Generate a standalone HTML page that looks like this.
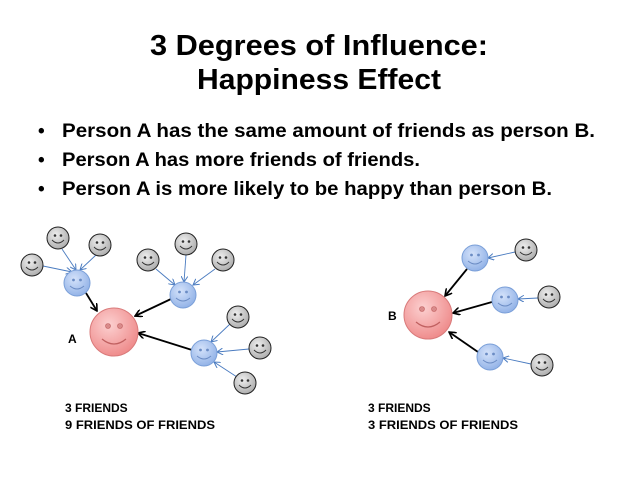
<!DOCTYPE html>
<html><head><style>body{margin:0;background:#fff}svg{display:block}</style></head><body>
<svg width="638" height="479" viewBox="0 0 638 479" xmlns="http://www.w3.org/2000/svg" font-family="Liberation Sans, sans-serif" font-weight="bold">
<defs>
<radialGradient id="g" cx="40%" cy="35%" r="70%"><stop offset="0" stop-color="#eee"/><stop offset="1" stop-color="#aaa"/></radialGradient>
<radialGradient id="b" cx="40%" cy="35%" r="70%"><stop offset="0" stop-color="#d4e2fa"/><stop offset="1" stop-color="#8fb0e6"/></radialGradient>
<radialGradient id="p" cx="40%" cy="35%" r="70%"><stop offset="0" stop-color="#fcd0d0"/><stop offset="1" stop-color="#ee8888"/></radialGradient>
<marker id="ak" markerWidth="8" markerHeight="8" refX="7" refY="4" orient="auto" markerUnits="userSpaceOnUse"><path d="M0,0 L7,4 L0,8" fill="none" stroke="#000" stroke-width="1.6"/></marker>
<marker id="ab" markerWidth="7" markerHeight="7" refX="6" refY="3.5" orient="auto" markerUnits="userSpaceOnUse"><path d="M0,0 L6,3.5 L0,7" fill="none" stroke="#4a7bc0" stroke-width="1"/></marker>
<g id="gf"><circle r="11" fill="url(#g)" stroke="#222" stroke-width="1"/><circle cx="-3" cy="-2.5" r="1.3" fill="#333"/><circle cx="3" cy="-2.5" r="1.3" fill="#333"/><path d="M-6,2 Q0,8 6,2" fill="none" stroke="#333" stroke-width="0.9"/></g>
<g id="bf"><circle r="13" fill="url(#b)" stroke="#7a9fd8" stroke-width="1"/><circle cx="-3.5" cy="-3" r="1.4" fill="#6b8cc4"/><circle cx="3.5" cy="-3" r="1.4" fill="#6b8cc4"/><path d="M-7,3 Q0,9 7,3" fill="none" stroke="#6b8cc4" stroke-width="1"/></g>
<g id="pf"><circle r="24" fill="url(#p)" stroke="#d97a7a" stroke-width="1"/><circle cx="-6" cy="-6" r="2.5" fill="#d98a8a" stroke="#c06060" stroke-width=".6"/><circle cx="6" cy="-6" r="2.5" fill="#d98a8a" stroke="#c06060" stroke-width=".6"/><path d="M-12,7 Q0,17 12,7" fill="none" stroke="#c06060" stroke-width="1.2"/></g>
</defs>
<text x="319" y="55" font-size="29" text-anchor="middle" textLength="338" lengthAdjust="spacingAndGlyphs">3 Degrees of Influence:</text>
<text x="319" y="89" font-size="29" text-anchor="middle" textLength="244" lengthAdjust="spacingAndGlyphs">Happiness Effect</text>
<g font-size="19">
<text x="38" y="137">•</text><text x="62" y="137" textLength="533" lengthAdjust="spacingAndGlyphs">Person A has the same amount of friends as person B.</text>
<text x="38" y="166">•</text><text x="62" y="166" textLength="358" lengthAdjust="spacingAndGlyphs">Person A has more friends of friends.</text>
<text x="38" y="195">•</text><text x="62" y="195" textLength="490" lengthAdjust="spacingAndGlyphs">Person A is more likely to be happy than person B.</text>
</g>
<g stroke="#4a7bc0" stroke-width="0.9" marker-end="url(#ab)">
<line x1="62" y1="249" x2="76" y2="270"/><line x1="96" y1="255" x2="80" y2="270"/><line x1="43" y1="266" x2="72" y2="272"/>
<line x1="156" y1="269" x2="175" y2="285"/><line x1="186" y1="255" x2="184" y2="282"/><line x1="215" y1="269" x2="193" y2="285"/>
<line x1="230" y1="324" x2="211" y2="342"/><line x1="249" y1="349" x2="217" y2="352"/><line x1="237" y1="377" x2="214" y2="362"/>
<line x1="515" y1="252" x2="488" y2="258"/><line x1="538" y1="298" x2="518" y2="299"/><line x1="531" y1="364" x2="503" y2="358"/>
</g>
<g stroke="#000" stroke-width="1.8" marker-end="url(#ak)">
<line x1="86" y1="293" x2="97" y2="311"/><line x1="171" y1="299" x2="135" y2="316"/><line x1="192" y1="350" x2="138" y2="333"/>
<line x1="467" y1="269" x2="445" y2="296"/><line x1="492" y1="302" x2="453" y2="313"/><line x1="478" y1="352" x2="449" y2="332"/>
</g>
<use href="#gf" x="58" y="238"/><use href="#gf" x="100" y="245"/><use href="#gf" x="32" y="265"/>
<use href="#gf" x="148" y="260"/><use href="#gf" x="186" y="244"/><use href="#gf" x="223" y="260"/>
<use href="#gf" x="238" y="317"/><use href="#gf" x="260" y="348"/><use href="#gf" x="245" y="383"/>
<use href="#bf" x="77" y="283"/><use href="#bf" x="183" y="295"/><use href="#bf" x="204" y="353"/>
<use href="#pf" x="114" y="332"/>
<use href="#gf" x="526" y="250"/><use href="#gf" x="549" y="297"/><use href="#gf" x="542" y="365"/>
<use href="#bf" x="475" y="258"/><use href="#bf" x="505" y="300"/><use href="#bf" x="490" y="357"/>
<use href="#pf" x="428" y="315"/>
<g font-size="12">
<text x="68" y="343">A</text><text x="388" y="320">B</text>
<text x="65" y="412">3 FRIENDS</text><text x="65" y="429" textLength="150" lengthAdjust="spacingAndGlyphs">9 FRIENDS OF FRIENDS</text>
<text x="368" y="412">3 FRIENDS</text><text x="368" y="429" textLength="150" lengthAdjust="spacingAndGlyphs">3 FRIENDS OF FRIENDS</text>
</g>
</svg>
</body></html>
